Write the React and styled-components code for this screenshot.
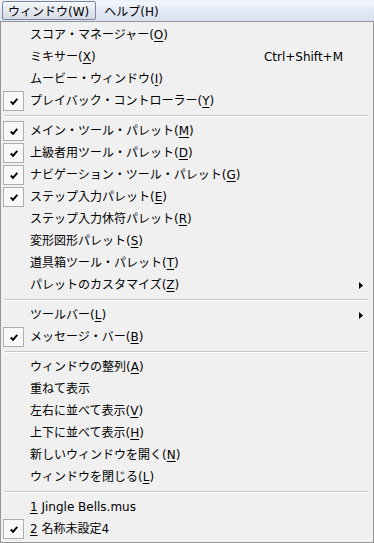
import React from "react";
import styled, { createGlobalStyle } from "styled-components";

const GlobalStyle = createGlobalStyle`
  html, body {
    margin: 0;
    padding: 0;
    background: #f0f0f0;
  }
  body {
    font-family: "DejaVu Sans", "Noto Sans CJK JP", sans-serif;
    font-size: 12px;
    color: #000;
  }
`;

const SFrame = styled.div`
  width: 374px;
  height: 543px;
  display: flex;
  flex-direction: column;
  overflow: hidden;
`;

const SMenuBar = styled.div`
  height: 21px;
  flex: none;
  display: flex;
  align-items: center;
  gap: 2px;
  padding-left: 2px;
  box-sizing: border-box;
  background: linear-gradient(#e9eef8 0%, #f4f7fc 12%, #e3e9f5 45%, #d9e1f1 100%);
`;

const SMenuTitle = styled.div`
  height: 19px;
  display: flex;
  align-items: center;
  padding: 0 6px 0 5px;
  box-sizing: border-box;
  border: 1px solid ${({ $active }) => ($active ? "#7a869c" : "transparent")};
  border-radius: 2px;
  background: ${({ $active }) =>
    $active ? "linear-gradient(#f7f8fa, #e4e7ee 50%, #d5dae4)" : "transparent"};
  white-space: nowrap;
`;

const SDropdown = styled.div`
  flex: 1;
  border: 1px solid #979797;
  background: #f0f0f0;
  padding: 2px 0 1px;
  display: flex;
  flex-direction: column;
`;

const SItem = styled.div`
  height: 22px;
  flex: none;
  display: grid;
  grid-template-columns: 29px 1fr auto 30px;
  align-items: center;
  white-space: nowrap;
`;

const SCheckSlot = styled.div`
  width: 21px;
  height: 20px;
  margin-left: 2px;
  box-sizing: border-box;
  display: flex;
  align-items: center;
  justify-content: center;
  border: 1px solid ${({ $on }) => ($on ? "#adadad" : "transparent")};
  background: ${({ $on }) => ($on ? "#f8f8f8" : "transparent")};
`;

const SLabel = styled.span`
  line-height: 22px;

  u {
    text-decoration: underline;
    text-underline-offset: 2px;
  }
`;

const SShortcut = styled.span`
  line-height: 22px;
`;

const SArrowCell = styled.div`
  display: flex;
  justify-content: flex-end;
  padding-right: 10px;
`;

const SSeparator = styled.div`
  height: 8px;
  flex: none;
  display: flex;
  flex-direction: column;
  justify-content: center;
  margin: 0 5px 0 4px;

  &::before {
    content: "";
    display: block;
    height: 1px;
    background: #c5c5c5;
  }
  &::after {
    content: "";
    display: block;
    height: 1px;
    background: #ffffff;
  }
`;

const CheckMark = () => (
  <svg width="8" height="7" viewBox="0 0 8 7">
    <path d="M0.8 3.5 L3 5.9 L7.3 0.9" fill="none" stroke="#000" strokeWidth="1.9" />
  </svg>
);

const Arrow = () => (
  <svg width="4" height="7" viewBox="0 0 4 7">
    <path d="M0 0 L4 3.5 L0 7 Z" fill="#000" />
  </svg>
);

const groups = [
  [
    { text: "スコア・マネージャー", key: "O" },
    { text: "ミキサー", key: "X", shortcut: "Ctrl+Shift+M" },
    { text: "ムービー・ウィンドウ", key: "I" },
    { text: "プレイバック・コントローラー", key: "Y", checked: true },
  ],
  [
    { text: "メイン・ツール・パレット", key: "M", checked: true },
    { text: "上級者用ツール・パレット", key: "D", checked: true },
    { text: "ナビゲーション・ツール・パレット", key: "G", checked: true },
    { text: "ステップ入力パレット", key: "E", checked: true },
    { text: "ステップ入力休符パレット", key: "R" },
    { text: "変形図形パレット", key: "S" },
    { text: "道具箱ツール・パレット", key: "T" },
    { text: "パレットのカスタマイズ", key: "Z", sub: true },
  ],
  [
    { text: "ツールバー", key: "L", sub: true },
    { text: "メッセージ・バー", key: "B", checked: true },
  ],
  [
    { text: "ウィンドウの整列", key: "A" },
    { text: "重ねて表示" },
    { text: "左右に並べて表示", key: "V" },
    { text: "上下に並べて表示", key: "H" },
    { text: "新しいウィンドウを開く", key: "N" },
    { text: "ウィンドウを閉じる", key: "L" },
  ],
  [
    { num: "1", text: " Jingle Bells.mus" },
    { num: "2", text: " 名称未設定4", checked: true },
  ],
];

const MenuItem = ({ text, mnemonic, num, shortcut, checked, sub }) => (
  <SItem>
    <SCheckSlot $on={checked}>{checked ? <CheckMark /> : null}</SCheckSlot>
    <SLabel>
      {num ? <u>{num}</u> : null}
      {text}
      {mnemonic ? (
        <>
          (<u>{mnemonic}</u>)
        </>
      ) : null}
    </SLabel>
    <SShortcut>{shortcut}</SShortcut>
    <SArrowCell>{sub ? <Arrow /> : null}</SArrowCell>
  </SItem>
);

export default function App() {
  return (
    <>
      <GlobalStyle />
      <SFrame>
        <SMenuBar>
          <SMenuTitle $active>ウィンドウ(W)</SMenuTitle>
          <SMenuTitle>ヘルプ(H)</SMenuTitle>
        </SMenuBar>
        <SDropdown>
          {groups.map((items, gi) => (
            <React.Fragment key={gi}>
              {gi > 0 ? <SSeparator /> : null}
              {items.map((it, i) => (
                <MenuItem
                  key={i}
                  text={it.text}
                  mnemonic={it.key}
                  num={it.num}
                  shortcut={it.shortcut}
                  checked={it.checked}
                  sub={it.sub}
                />
              ))}
            </React.Fragment>
          ))}
        </SDropdown>
      </SFrame>
    </>
  );
}
